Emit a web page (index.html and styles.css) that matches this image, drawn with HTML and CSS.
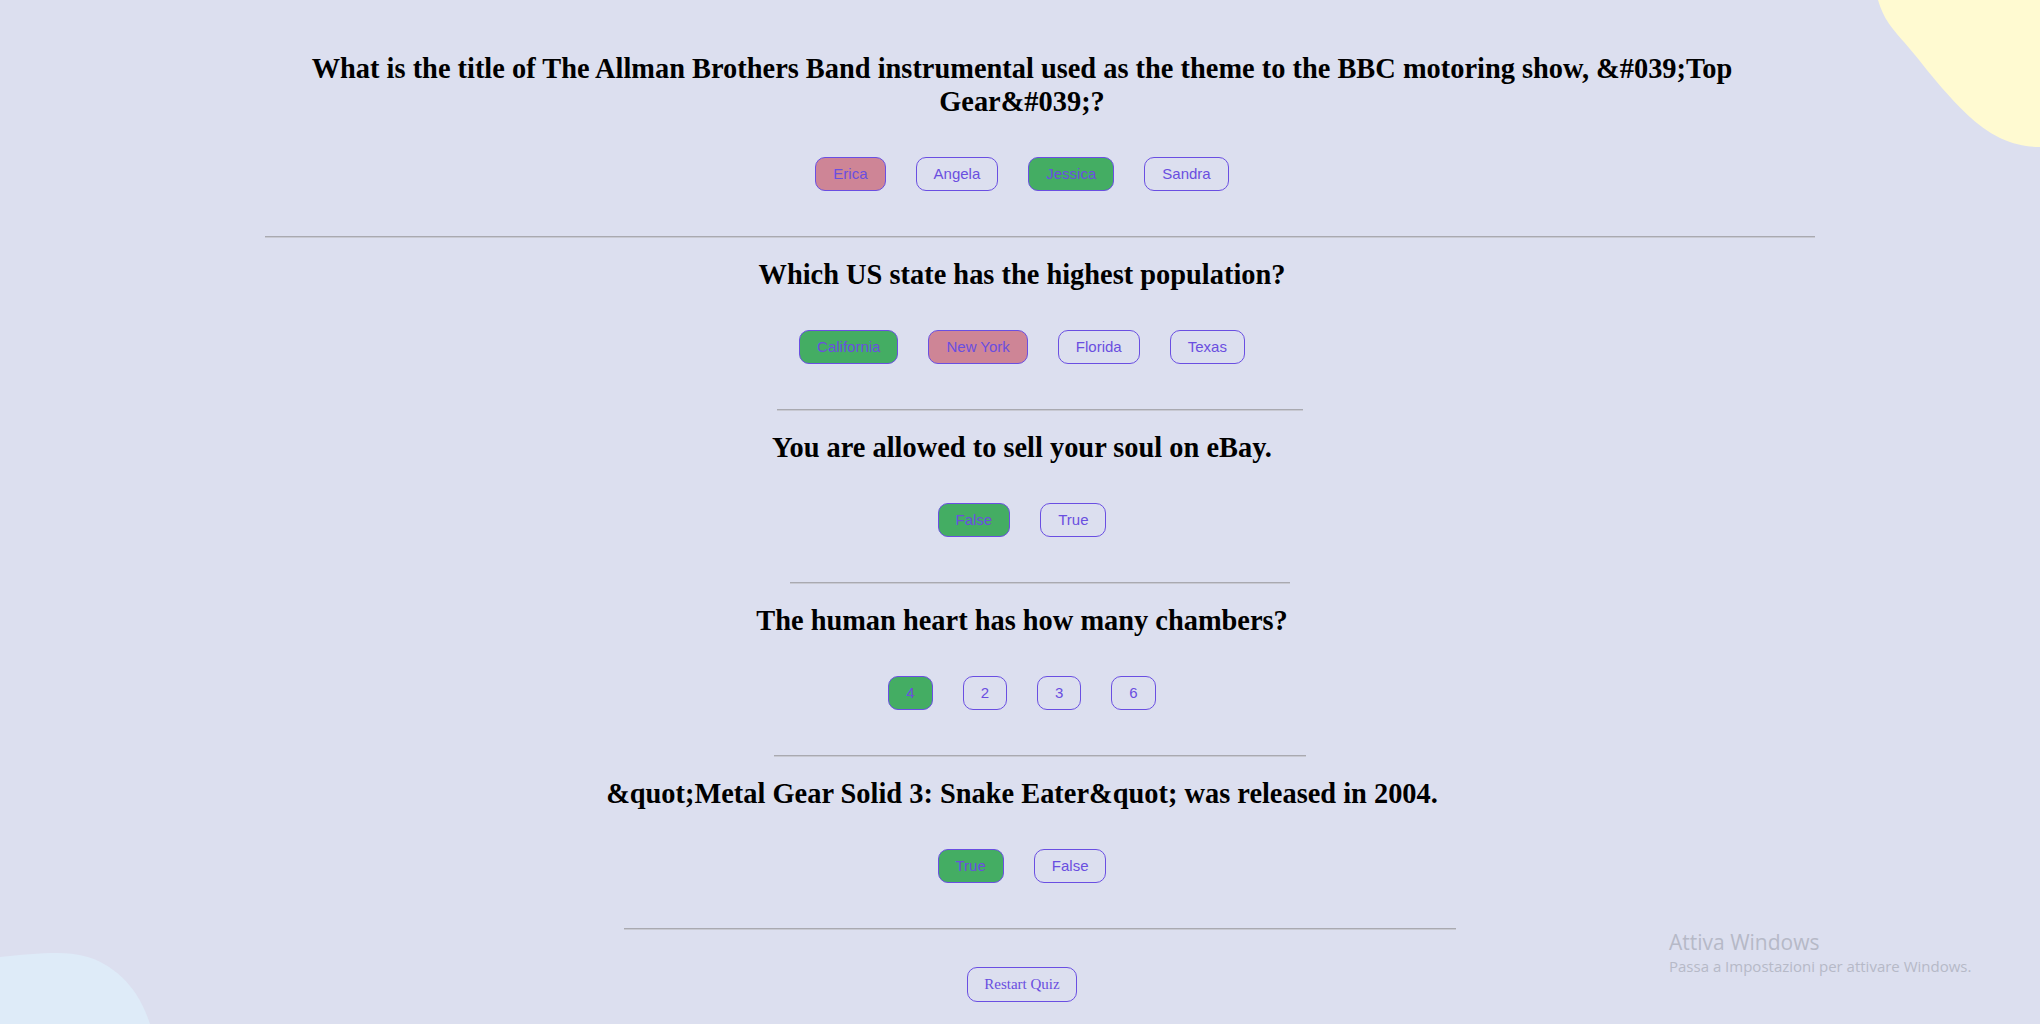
FILE: index.html
```html
<!DOCTYPE html>
<html lang="en">
<head>
<meta charset="utf-8">
<title>Quizzical</title>
<link rel="stylesheet" href="styles.css">
</head>
<body>
  <svg class="blob blob-yellow" viewBox="0 0 170 150" aria-hidden="true">
    <path d="M8 0 C14 20 22 28 34 42 C48 58 58 72 72 88 C88 106 106 126 130 138 C145 145 158 147 170 147 V0 Z" fill="#FFFAD1"/>
  </svg>
  <svg class="blob blob-blue" viewBox="0 0 160 75" aria-hidden="true">
    <path d="M0 8 C20 6 40 4 57 4 C78 4 92 8 104 15 C118 23 128 33 136 45 C143 56 147 66 150 75 L0 75 Z" fill="#DEEBF8"/>
  </svg>

  <main class="quiz">
    <section class="question">
      <h2 class="question-title">What is the title of The Allman Brothers Band instrumental used as the theme to the BBC motoring show, &amp;#039;Top Gear&amp;#039;?</h2>
      <div class="answers">
        <button class="answer incorrect">Erica</button>
        <button class="answer">Angela</button>
        <button class="answer correct">Jessica</button>
        <button class="answer">Sandra</button>
      </div>
      <hr class="divider">
    </section>

    <section class="question">
      <h2 class="question-title">Which US state has the highest population?</h2>
      <div class="answers">
        <button class="answer correct">California</button>
        <button class="answer incorrect">New York</button>
        <button class="answer">Florida</button>
        <button class="answer">Texas</button>
      </div>
      <hr class="divider">
    </section>

    <section class="question">
      <h2 class="question-title">You are allowed to sell your soul on eBay.</h2>
      <div class="answers">
        <button class="answer correct">False</button>
        <button class="answer">True</button>
      </div>
      <hr class="divider">
    </section>

    <section class="question">
      <h2 class="question-title">The human heart has how many chambers?</h2>
      <div class="answers">
        <button class="answer correct">4</button>
        <button class="answer">2</button>
        <button class="answer">3</button>
        <button class="answer">6</button>
      </div>
      <hr class="divider">
    </section>

    <section class="question">
      <h2 class="question-title">&amp;quot;Metal Gear Solid 3: Snake Eater&amp;quot; was released in 2004.</h2>
      <div class="answers">
        <button class="answer correct">True</button>
        <button class="answer">False</button>
      </div>
      <hr class="divider">
    </section>

    <button class="restart">Restart Quiz</button>
  </main>

  <div class="watermark">
    <div class="watermark-title">Attiva Windows</div>
    <div class="watermark-text">Passa a Impostazioni per attivare Windows.</div>
  </div>
</body>
</html>
```

FILE: styles.css
```css
html, body {
  margin: 0;
  padding: 0;
}

body {
  position: relative;
  height: 1024px;
  overflow: hidden;
  background: #dcdfef;
  font-family: "Liberation Serif", "Times New Roman", serif;
  color: #000;
}

.blob {
  position: absolute;
  display: block;
}

.blob-yellow {
  top: 0;
  right: 0;
  width: 170px;
  height: 150px;
}

.blob-blue {
  left: 0;
  bottom: 0;
  width: 160px;
  height: 75px;
}

.quiz {
  position: relative;
  display: flex;
  flex-direction: column;
  align-items: center;
  padding: 52px 0 0 4px;
}

.question {
  display: flex;
  flex-direction: column;
  align-items: center;
  max-width: 1550px;
}

.question-title {
  margin: 0 0 39px;
  font-size: 28.4px;
  line-height: 33px;
  font-weight: bold;
  text-align: center;
}

.answers {
  display: flex;
  justify-content: center;
  gap: 30px;
}

.answer {
  font-family: "Liberation Sans", Arial, sans-serif;
  font-size: 15px;
  line-height: 16px;
  padding: 8px 17px;
  border: 1px solid #6a4fe2;
  border-radius: 10px;
  background: transparent;
  color: #6a4ee0;
  cursor: pointer;
}

.answer.correct {
  background: #44ad63;
}

.answer.incorrect {
  background: #ce8596;
}

.divider {
  align-self: stretch;
  margin: 45px -18px 20px 18px;
  border: 0;
  border-top: 1px solid #a9a9b0;
  border-bottom: 1px solid #c8c9d2;
}

.restart {
  margin-top: 17px;
  font-family: "Liberation Serif", "Times New Roman", serif;
  font-size: 15px;
  line-height: 17px;
  padding: 8px 16px;
  border: 1px solid #6a4fe2;
  border-radius: 10px;
  background: transparent;
  color: #6a4ee0;
  cursor: pointer;
}

.watermark {
  position: absolute;
  left: 1669px;
  top: 929px;
  font-family: "Open Sans", "Noto Sans", sans-serif;
  color: #b6b9c7;
}

.watermark-title {
  font-size: 21px;
  line-height: 27px;
}

.watermark-text {
  font-size: 15px;
  line-height: 20px;
}
```
